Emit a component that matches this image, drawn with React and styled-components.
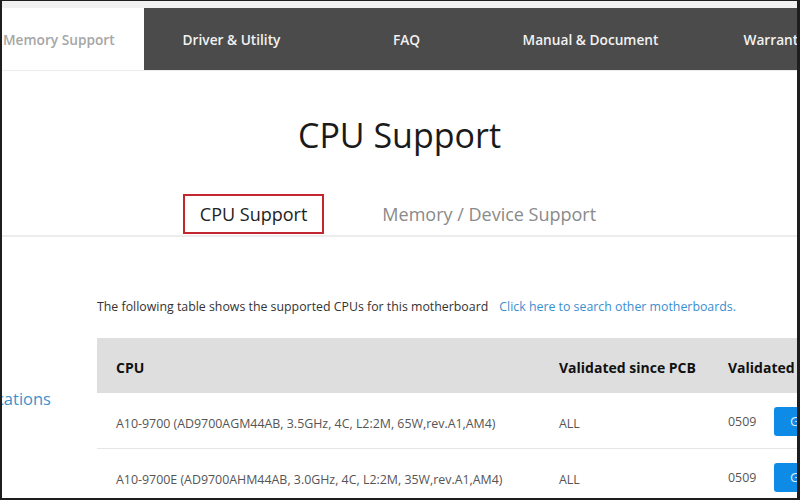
import React from 'react'
import styled, { createGlobalStyle } from 'styled-components'

const GlobalStyle = createGlobalStyle`
  html, body {
    margin: 0;
    padding: 0;
    background: #fff;
  }
  body {
    font-family: "Open Sans", "Noto Sans", sans-serif;
  }
`

const Frame = styled.div`
  width: 800px;
  height: 500px;
  box-sizing: border-box;
  border-left: 2px solid #1e1e1e;
  border-top: 1px solid #1e1e1e;
  border-right: 3px solid #1e1e1e;
  border-bottom: 2px solid #1e1e1e;
  overflow: hidden;
  background: #fff;
`

const TopStrip = styled.div`
  height: 7px;
  background: #f1f1f1;
`

const Nav = styled.nav`
  display: flex;
  height: 62px;
  background: #4b4b4b;
  border-bottom: 1px solid #ececec;
  white-space: nowrap;
`

const NavItem = styled.div`
  flex: 0 0 ${p => p.w}px;
  display: flex;
  align-items: center;
  justify-content: ${p => (p.left ? 'flex-start' : 'center')};
  padding-left: ${p => (p.left ? '1px' : '0')};
  box-sizing: border-box;
  background: ${p => (p.active ? '#fff' : 'transparent')};
  color: ${p => (p.active ? '#a6a6a6' : '#f2f2f2')};
  font-size: 13.7px;
  font-weight: 600;
`

const Title = styled.h1`
  margin: 44px 0 0;
  text-align: center;
  font-size: 34px;
  font-weight: 400;
  color: #1a1a1a;
  line-height: 40px;
`

const TabBar = styled.div`
  display: flex;
  justify-content: center;
  gap: 38px;
  margin-top: 39px;
  border-bottom: 2px solid #ececec;
  padding-bottom: 1px;
`

const Tab = styled.div`
  height: 40px;
  box-sizing: border-box;
  padding: 0 ${p => (p.active ? '15px' : '18px')};
  display: flex;
  align-items: center;
  font-size: 18px;
  color: ${p => (p.active ? '#222' : '#8a8a8a')};
  border: 2px solid ${p => (p.active ? '#c3262f' : 'transparent')};
`

const Body = styled.div`
  display: flex;
`

const Sidebar = styled.aside`
  flex: 0 0 95px;
  box-sizing: border-box;
  display: flex;
  justify-content: flex-end;
  align-items: flex-start;
  padding: 150px 46px 0 0;
  color: #3d92cc;
  font-size: 16.5px;
  white-space: nowrap;
  overflow: hidden;
`

const SideLink = styled.span`
  flex: 0 0 auto;
`

const Content = styled.section`
  flex: 1 0 auto;
  padding-top: 61px;
`

const Intro = styled.p`
  margin: 0 0 22px;
  font-size: 12.35px;
  color: #333;
  white-space: nowrap;
  line-height: 18px;
`

const Link = styled.a`
  color: #3a8ecf;
  margin-left: 11px;
  text-decoration: none;
`

const Table = styled.div`
  width: 760px;
`

const Row = styled.div`
  display: grid;
  grid-template-columns: 443px 169px 1fr;
  height: ${p => (p.head ? '55px' : '56px')};
  align-items: center;
  background: ${p => (p.head ? '#dedede' : '#fff')};
  border-bottom: ${p => (p.head ? 'none' : '1px solid #e6e6e6')};
  box-sizing: border-box;
  padding-top: ${p => (p.head ? '3px' : '5px')};
`

const Cell = styled.div`
  padding-left: 19px;
  font-size: ${p => (p.head ? '14px' : '12.4px')};
  font-weight: ${p => (p.head ? 700 : 400)};
  color: ${p => (p.head ? '#111' : '#555')};
  white-space: nowrap;
  display: flex;
  align-items: center;
`

const Bios = styled.span`
  width: 46px;
  margin-top: -4px;
`

const GoButton = styled.button`
  border: none;
  background: #0d8be6;
  color: #dbeeff;
  border-radius: 3px;
  height: 29px;
  width: 60px;
  font-family: inherit;
  font-size: 13px;
  text-align: left;
  padding-left: 16px;
  margin-top: -4px;
`

const cpus = [
  'A10-9700 (AD9700AGM44AB, 3.5GHz, 4C, L2:2M, 65W,rev.A1,AM4)',
  'A10-9700E (AD9700AHM44AB, 3.0GHz, 4C, L2:2M, 35W,rev.A1,AM4)',
]

const App = () => (
  <Frame>
    <GlobalStyle />
    <TopStrip />
    <Nav>
      <NavItem w={142} active left>Memory Support</NavItem>
      <NavItem w={175}>Driver &amp; Utility</NavItem>
      <NavItem w={175}>FAQ</NavItem>
      <NavItem w={193}>Manual &amp; Document</NavItem>
      <NavItem w={175}>Warranty</NavItem>
    </Nav>
    <Title>CPU Support</Title>
    <TabBar>
      <Tab active>CPU Support</Tab>
      <Tab>Memory / Device Support</Tab>
    </TabBar>
    <Body>
      <Sidebar><SideLink>Specifications</SideLink></Sidebar>
      <Content>
        <Intro>
          The following table shows the supported CPUs for this motherboard
          <Link>Click here to search other motherboards.</Link>
        </Intro>
        <Table>
          <Row head>
            <Cell head>CPU</Cell>
            <Cell head>Validated since PCB</Cell>
            <Cell head>Validated since BIOS</Cell>
          </Row>
          {cpus.map(cpu => (
            <Row key={cpu}>
              <Cell>{cpu}</Cell>
              <Cell>ALL</Cell>
              <Cell>
                <Bios>0509</Bios>
                <GoButton>Go</GoButton>
              </Cell>
            </Row>
          ))}
        </Table>
      </Content>
    </Body>
  </Frame>
)

export default App
